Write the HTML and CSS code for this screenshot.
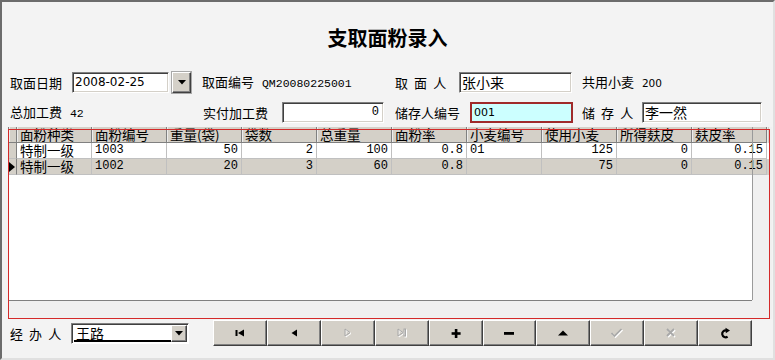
FILE: index.html
```html
<!DOCTYPE html>
<html lang="zh-CN">
<head>
    <meta charset="UTF-8">
    <meta name="viewport" content="width=device-width, initial-scale=1.0">
    <title>支取面粉录入</title>
    <link rel="stylesheet" href="styles.css">
</head>
<body>
    <div class="window">
        <h1 class="title">支取面粉录入</h1>

        <div class="form-row">
            <span class="label w-62">取面日期</span>
            <div class="date-combo">
                <span class="edit sans">2008-02-25</span>
                <span class="drop-btn"><svg width="8" height="5" viewBox="0 0 8 5"><polygon points="0,0 8,0 4,4.5" fill="#000"/></svg></span>
            </div>
            <span class="label w-193 ml-11">取面编号 <span class="mono">QM20080225001</span></span>
            <span class="label spaced w-64">取 面 人</span>
            <span class="edit w-113">张小来</span>
            <span class="label ml-10">共用小麦 <span class="sans small">200</span></span>
        </div>

        <div class="form-row row-2">
            <span class="label w-193">总加工费 <span class="mono">42</span></span>
            <span class="label w-79">实付加工费</span>
            <span class="edit num w-102">0</span>
            <span class="label w-75 ml-11">储存人编号</span>
            <span class="edit hilite sans w-103">001</span>
            <span class="label spaced w-60 ml-9">储 存 人</span>
            <span class="edit w-120">李一然</span>
        </div>

        <div class="grid">
            <div class="grid-client">
                <div class="grid-row grid-head">
                    <span class="ind"></span>
                    <span>面粉种类</span>
                    <span>面粉编号</span>
                    <span>重量(袋)</span>
                    <span>袋数</span>
                    <span>总重量</span>
                    <span>面粉率</span>
                    <span>小麦编号</span>
                    <span>使用小麦</span>
                    <span>所得麸皮</span>
                    <span>麸皮率</span>
                    <span class="stub"></span>
                </div>
                <div class="grid-row">
                    <span class="ind"></span>
                    <span>特制一级</span>
                    <span class="n">1003</span>
                    <span class="n r">50</span>
                    <span class="n r">2</span>
                    <span class="n r">100</span>
                    <span class="n r">0.8</span>
                    <span class="n">01</span>
                    <span class="n r">125</span>
                    <span class="n r">0</span>
                    <span class="n r">0.15</span>
                    <span class="stub"></span>
                </div>
                <div class="grid-row current">
                    <span class="ind"><svg width="6" height="10" viewBox="0 0 6 10"><polygon points="0,0 6,5 0,10" fill="#000"/></svg></span>
                    <span>特制一级</span>
                    <span class="n">1002</span>
                    <span class="n r">20</span>
                    <span class="n r">3</span>
                    <span class="n r">60</span>
                    <span class="n r">0.8</span>
                    <span class="n"></span>
                    <span class="n r">75</span>
                    <span class="n r">0</span>
                    <span class="n r">0.15</span>
                    <span class="stub"></span>
                </div>
            </div>
        </div>

        <div class="bottom-row">
            <span class="label spaced w-61">经 办 人</span>
            <div class="combo-box">
                <span class="combo-text">王路</span>
                <span class="drop-btn small-btn"><svg width="8" height="5" viewBox="0 0 8 5"><polygon points="0,0 8,0 4,4.5" fill="#000"/></svg></span>
            </div>
            <div class="navigator">
                <button class="nav-btn" title="第一条">
                    <svg width="12" height="12" viewBox="0 0 12 12"><rect x="1.5" y="3" width="2" height="6" fill="#000"/><polygon points="10,2.5 4,6 10,9.5" fill="#000"/></svg>
                </button>
                <button class="nav-btn" title="上一条">
                    <svg width="12" height="12" viewBox="0 0 12 12"><polygon points="9,2.5 3.5,6 9,9.5" fill="#000"/></svg>
                </button>
                <button class="nav-btn" title="下一条" disabled>
                    <svg width="12" height="12" viewBox="0 0 12 12"><polygon points="4,3 9,6.5 4,10" fill="none" stroke="#fff"/><polygon points="3,2 8,5.5 3,9" fill="none" stroke="#a8a8a8"/></svg>
                </button>
                <button class="nav-btn" title="最后一条" disabled>
                    <svg width="12" height="12" viewBox="0 0 12 12"><polygon points="3,3 8,6.5 3,10" fill="none" stroke="#fff"/><rect x="9" y="3" width="1.5" height="7" fill="none" stroke="#fff"/><polygon points="2,2 7,5.5 2,9" fill="none" stroke="#a8a8a8"/><rect x="8" y="2" width="1.5" height="7" fill="none" stroke="#a8a8a8"/></svg>
                </button>
                <button class="nav-btn" title="新增">
                    <svg width="12" height="12" viewBox="0 0 12 12"><rect x="4.8" y="2" width="2.6" height="9" fill="#000"/><rect x="1.6" y="5.2" width="9" height="2.6" fill="#000"/></svg>
                </button>
                <button class="nav-btn" title="删除">
                    <svg width="12" height="12" viewBox="0 0 12 12"><rect x="1" y="5" width="10" height="2.8" fill="#000"/></svg>
                </button>
                <button class="nav-btn" title="编辑">
                    <svg width="12" height="12" viewBox="0 0 12 12"><polygon points="1,8.5 6,3.5 11,8.5" fill="#000"/></svg>
                </button>
                <button class="nav-btn" title="保存" disabled>
                    <svg width="14" height="12" viewBox="0 0 14 12"><path d="M2.5 7 L5.5 10 L12.5 3" fill="none" stroke="#fff" stroke-width="1.6"/><path d="M1.5 6 L4.5 9 L11.5 2" fill="none" stroke="#a8a8a8" stroke-width="1.6"/></svg>
                </button>
                <button class="nav-btn" title="取消" disabled>
                    <svg width="12" height="12" viewBox="0 0 12 12"><path d="M3 3 L10 10 M10 3 L3 10" stroke="#fff" stroke-width="1.8"/><path d="M2 2 L9 9 M9 2 L2 9" stroke="#a8a8a8" stroke-width="1.8"/></svg>
                </button>
                <button class="nav-btn" title="刷新">
                    <svg width="12" height="12" viewBox="0 0 12 12"><path d="M7.6 3.6 A3.4 3.4 0 1 0 8.6 9.6" fill="none" stroke="#000" stroke-width="2.2"/><polygon points="6.5,0.8 11,3.6 6.8,6.2" fill="#000"/></svg>
                </button>
            </div>
        </div>
    </div>
</body>
</html>
```

FILE: styles.css
```css
:root {
    --window-bg: #f3f3f3;
    --face: #d4d0c8;
    --shadow: #808080;
    --dark: #404040;
    --grid-line: #c0c0c0;
}

* {
    box-sizing: border-box;
}

body {
    margin: 0;
    background-color: var(--window-bg);
    font-family: "Noto Sans CJK SC", sans-serif;
    font-size: 13px;
    color: #000;
}

.window {
    width: 775px;
    height: 360px;
    border-top: 2px solid #6c6c6c;
    border-left: 2px solid #6c6c6c;
    border-right: 2px solid #e0e0e0;
    border-bottom: 2px solid #e0e0e0;
}

.title {
    margin: 0;
    height: 70px;
    display: flex;
    align-items: center;
    justify-content: center;
    font-size: 20px;
    font-weight: bold;
}

/* lignes du formulaire */
.form-row {
    display: flex;
    align-items: center;
    height: 21px;
    margin-left: 8px;
}

.row-2 {
    margin-top: 9px;
}

.label {
    flex: none;
    white-space: nowrap;
    line-height: 21px;
}

.spaced {
    letter-spacing: 1.6px;
}

.mono {
    font-family: "Liberation Mono", monospace;
    font-size: 11.5px;
}

.label .mono,
.label .sans {
    margin-left: 5px;
}

.sans {
    font-family: "DejaVu Sans", sans-serif;
    font-size: 12px;
}

.sans.small {
    font-size: 10.5px;
}

.w-60 { width: 60px; }
.w-61 { width: 61px; }
.w-62 { width: 62px; }
.w-64 { width: 64px; }
.w-75 { width: 75px; }
.w-79 { width: 79px; }
.w-102 { width: 102px; }
.w-103 { width: 103px; }
.w-113 { width: 113px; }
.w-120 { width: 120px; }
.w-193 { width: 193px; }
.ml-9 { margin-left: 9px; }
.ml-10 { margin-left: 10px; }
.ml-11 { margin-left: 11px; }

.edit {
    flex: none;
    display: block;
    height: 21px;
    padding: 0 2px;
    background-color: #fff;
    border: 1px solid;
    border-color: var(--shadow) #fff #fff var(--shadow);
    box-shadow: inset 1px 1px 0 var(--dark), inset -1px -1px 0 var(--face);
    font-size: 14px;
    line-height: 18px;
    white-space: nowrap;
    overflow: hidden;
}

.edit.sans {
    font-size: 12px;
}

.edit.num {
    text-align: right;
    font-family: "Liberation Mono", monospace;
    font-size: 12px;
    padding-right: 4px;
}

.edit.hilite {
    background-color: #ccffff;
    border: 2px solid #a02a2a;
    box-shadow: none;
    font-size: 11px;
    line-height: 17px;
}

.date-combo {
    flex: none;
    display: flex;
    gap: 3px;
    width: 119px;
    height: 21px;
}

.date-combo .edit {
    flex: 1;
}

.drop-btn {
    flex: none;
    display: flex;
    align-items: center;
    justify-content: center;
    width: 19px;
    height: 21px;
    background-color: var(--face);
    border: 1px solid;
    border-color: #fff var(--dark) var(--dark) #fff;
    box-shadow: inset -1px -1px 0 var(--shadow), 0 0 0 1px #a8a8a8;
}

/* grille */
.grid {
    position: relative;
    margin: 4px 0 0 6px;
    width: 764px;
    height: 192px;
    background-color: #f0f0f0;
    border-left: 1px solid var(--shadow);
}

.grid::before {
    content: "";
    position: absolute;
    left: 743px;
    top: 0;
    width: 1px;
    height: 173px;
    background-color: #9a9a9a;
    z-index: 1;
}

.grid::after {
    content: "";
    position: absolute;
    left: -1px;
    top: 2px;
    right: 2px;
    bottom: 0;
    border: 1px solid #d42a2a;
    z-index: 2;
}

.grid-client {
    width: 743px;
    height: 174px;
    background-color: #fff;
    border-bottom: 1px solid var(--shadow);
}

.grid-row {
    display: grid;
    grid-template-columns: 8px repeat(10, 75px) 2px;
    width: 760px;
    height: 16px;
    background-color: #fff;
}

.grid-row > span {
    display: block;
    padding: 0 3px;
    border-right: 1px solid var(--grid-line);
    border-bottom: 1px solid var(--grid-line);
    font-size: 13.5px;
    line-height: 15px;
    white-space: nowrap;
}

.grid-row > .n {
    font-family: "Liberation Mono", monospace;
    font-size: 12px;
}

.grid-row > .r {
    text-align: right;
}

.grid-row > .ind {
    padding: 0;
    display: flex;
    align-items: center;
    background-color: var(--face);
    border-right-color: var(--shadow);
}

.grid-row > .stub {
    padding: 0;
    border: none;
}

.grid-head {
    background-color: var(--face);
}

.grid-head > span {
    color: #000;
    border-right-color: var(--shadow);
    border-bottom-color: var(--shadow);
    box-shadow: inset 1px 0 0 #ececec;
}

.grid-row.current {
    background-color: var(--face);
}

/* barre du bas */
.bottom-row {
    display: flex;
    align-items: center;
    height: 26px;
    margin: 1px 0 0 8px;
}

.combo-box {
    flex: none;
    display: flex;
    width: 118px;
    height: 21px;
    padding: 1px;
    background-color: #fff;
    border: 1px solid;
    border-color: var(--shadow) #fff #fff var(--shadow);
    box-shadow: inset 1px 1px 0 var(--dark);
}

.combo-text {
    flex: 1;
    margin-left: 1px;
    padding-left: 2px;
    border-bottom: 2px solid #000;
    font-size: 14px;
    line-height: 16px;
}

.small-btn {
    width: 16px;
    height: 17px;
    box-shadow: inset -1px -1px 0 var(--shadow);
}

.navigator {
    flex: none;
    display: grid;
    grid-template-columns: repeat(10, 1fr);
    width: 539px;
    height: 26px;
    margin-left: 24px;
}

.nav-btn {
    display: flex;
    align-items: center;
    justify-content: center;
    padding: 0;
    height: 26px;
    background-color: var(--face);
    border: 1px solid;
    border-color: #fff var(--dark) var(--dark) #fff;
    box-shadow: inset -1px -1px 0 var(--shadow);
}
```
